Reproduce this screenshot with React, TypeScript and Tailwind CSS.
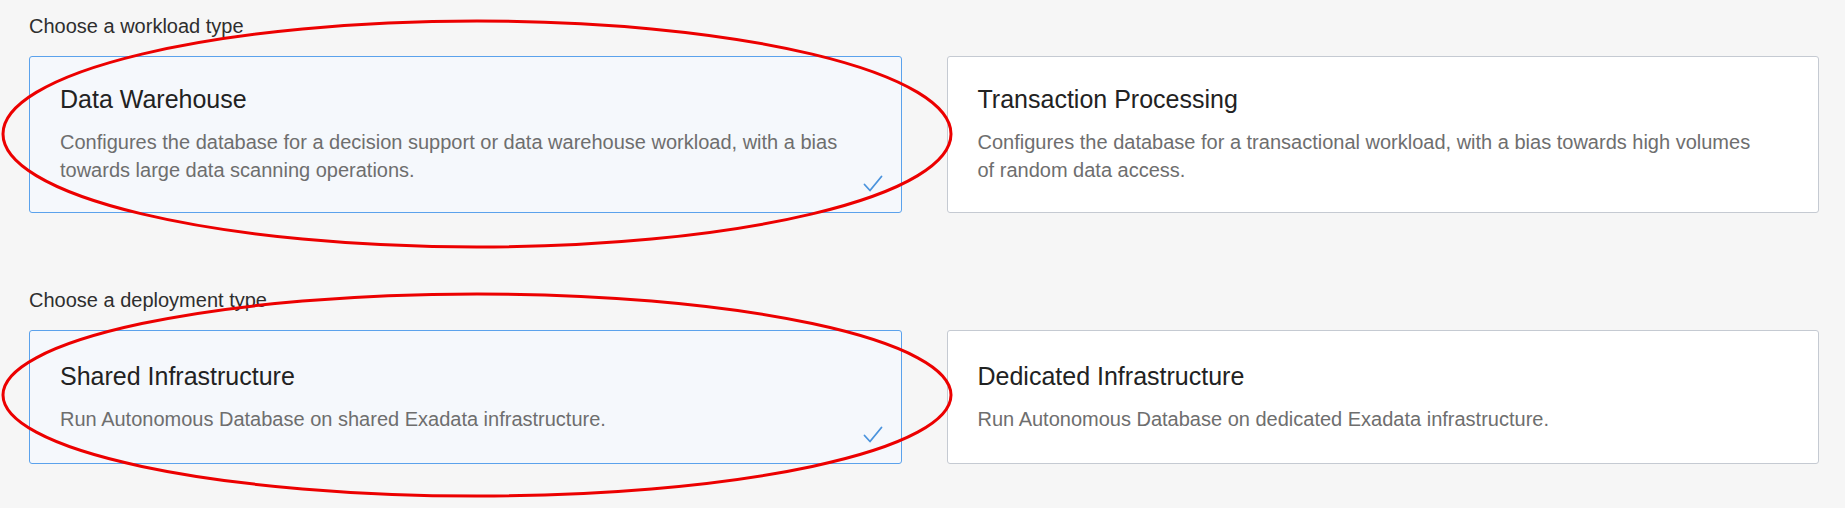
import React from "react";

// ============================================================================
// Option card
// ============================================================================

type OptionCardProps = {
  title: string;
  description: string;
  selected?: boolean;
};

const Check = () => (
  <svg
    viewBox="0 0 20 17"
    className="absolute right-[18px] bottom-[20px] h-[17px] w-[20px]"
    fill="none"
    stroke="#4a93dd"
    strokeWidth={1.8}
    strokeLinecap="round"
    strokeLinejoin="round"
  >
    <path d="M1.5 9.5 L7 15.5 L18.5 1.5" />
  </svg>
);

const OptionCard = ({ title, description, selected }: OptionCardProps) => (
  <div
    className={
      selected
        ? "relative flex min-h-[134px] flex-col justify-center rounded-[3px] border border-[#5ba2ec] bg-[#f5f8fc] pl-[30px] pr-[52px] pt-[27px] pb-[28px]"
        : "relative flex min-h-[134px] flex-col justify-center rounded-[3px] border border-[#c5cad2] bg-white pl-[30px] pr-[52px] pt-[27px] pb-[28px]"
    }
  >
    <h3 className="text-[25px] leading-[30px] text-[#222]">{title}</h3>
    <p className="mt-[14px] text-[20px] leading-[28px] text-[#6e6e6e]">
      {description}
    </p>
    {selected && <Check />}
  </div>
);

// ============================================================================
// App
// ============================================================================

export default function App() {
  return (
    <div className="relative h-[508px] w-full overflow-hidden bg-[#f6f6f6] pl-[29px] pr-[26px] pt-[12px] font-['Liberation_Sans',Arial,sans-serif]">
      {/* Workload type */}
      <section>
        <p className="mb-[16px] text-[20px] leading-[28px] text-[#2e2e2e]">
          Choose a workload type
        </p>
        <div className="grid grid-cols-2 gap-x-[45px]">
          <OptionCard
            selected
            title="Data Warehouse"
            description="Configures the database for a decision support or data warehouse workload, with a bias towards large data scanning operations."
          />
          <OptionCard
            title="Transaction Processing"
            description="Configures the database for a transactional workload, with a bias towards high volumes of random data access."
          />
        </div>
      </section>

      {/* Deployment type */}
      <section className="mt-[73px]">
        <p className="mb-[16px] text-[20px] leading-[28px] text-[#2e2e2e]">
          Choose a deployment type
        </p>
        <div className="grid grid-cols-2 gap-x-[45px]">
          <OptionCard
            selected
            title="Shared Infrastructure"
            description="Run Autonomous Database on shared Exadata infrastructure."
          />
          <OptionCard
            title="Dedicated Infrastructure"
            description="Run Autonomous Database on dedicated Exadata infrastructure."
          />
        </div>
      </section>

      {/* Hand-drawn highlight rings */}
      <svg
        viewBox="0 0 1845 508"
        className="pointer-events-none absolute inset-0 h-full w-full"
        fill="none"
        stroke="#ec0000"
        strokeWidth={3}
      >
        <ellipse cx={477} cy={134} rx={474} ry={113} />
        <ellipse cx={477} cy={395} rx={474} ry={101} />
      </svg>
    </div>
  );
}
